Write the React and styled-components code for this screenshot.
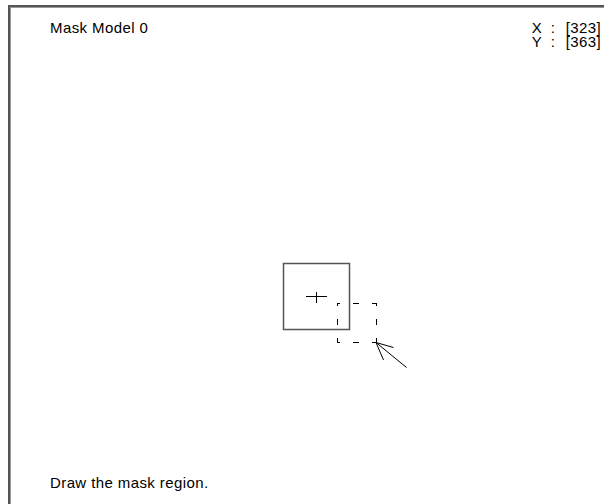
import React from "react";
import styled, { createGlobalStyle } from "styled-components";

const Global = createGlobalStyle`
  html, body { margin: 0; padding: 0; height: 100%; background: #fff; }
  #root { height: 100%; }
  body { font-family: "Liberation Sans", Arial, Helvetica, sans-serif; color: #000; }
`;

const Frame = styled.div`
  box-sizing: border-box;
  margin: 5px 0 0 8px;
  height: calc(100vh - 5px);
  border-left: 2px solid #555;
  border-top: 2px solid #555;
  box-shadow: inset 1px 1px 0 #9a9a9a;
  display: flex;
  flex-direction: column;
  position: relative;
  font-size: 15px;
  letter-spacing: 0.4px;
  line-height: 14px;
`;

const Header = styled.div`
  display: flex;
  justify-content: space-between;
  align-items: flex-start;
  padding: 14px 3px 0 40px;
`;

const Title = styled.div`
  white-space: nowrap;
`;

const Coords = styled.div`
  display: grid;
  grid-template-columns: 19px 15px auto;
`;

const Cell = styled.span`
  white-space: nowrap;
  text-align: ${(p) => (p.$right ? "right" : "left")};
`;

const Canvas = styled.div`
  flex: 1;
`;

const Footer = styled.div`
  padding: 0 0 14px 40px;
`;

const Drawing = styled.svg`
  position: absolute;
  left: 0;
  top: 0;
  width: 100%;
  height: 100%;
  pointer-events: none;
`;

const dash = { stroke: "#000", strokeWidth: 1, strokeDasharray: "6 13", strokeDashoffset: 3, fill: "none" };

export default function App() {
  return (
    <>
      <Global />
      <Frame>
        <Header>
          <Title>Mask Model 0</Title>
          <Coords>
            <Cell>X</Cell>
            <Cell>:</Cell>
            <Cell $right>[323]</Cell>
            <Cell>Y</Cell>
            <Cell>:</Cell>
            <Cell $right>[363]</Cell>
          </Coords>
        </Header>
        <Canvas />
        <Footer>Draw the mask region.</Footer>
        <Drawing>
          <rect x="273.5" y="256.5" width="66" height="66" fill="none" stroke="#555" strokeWidth="1.5" />
          <line x1="296" y1="289.5" x2="317" y2="289.5" stroke="#000" strokeWidth="1" />
          <line x1="306.5" y1="285" x2="306.5" y2="296" stroke="#000" strokeWidth="1" />
          <line x1="327" y1="296.5" x2="366" y2="296.5" style={dash} />
          <line x1="366.5" y1="296" x2="366.5" y2="335" style={dash} />
          <line x1="327.5" y1="296" x2="327.5" y2="335" style={dash} />
          <line x1="327" y1="335.5" x2="366" y2="335.5" style={dash} />
          <g stroke="#000" strokeWidth="1" fill="none">
            <line x1="366" y1="335.5" x2="396.5" y2="360.5" />
            <line x1="366" y1="335.5" x2="383.5" y2="340.5" />
            <line x1="366" y1="335.5" x2="373.5" y2="353" />
          </g>
        </Drawing>
      </Frame>
    </>
  );
}
